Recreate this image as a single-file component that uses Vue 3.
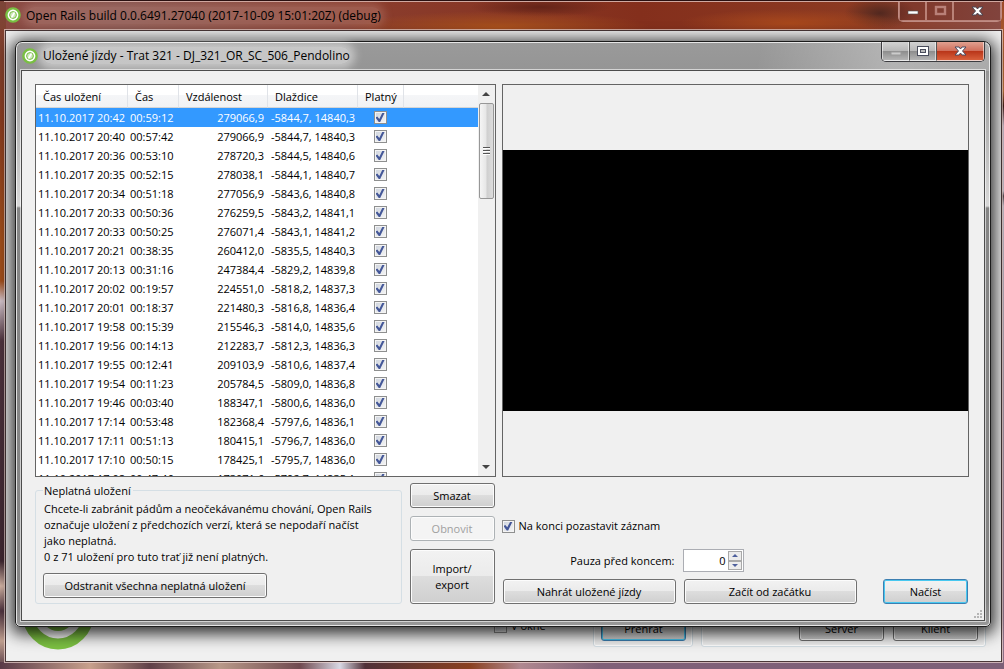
<script setup>
import { ref } from 'vue'

const rows = ref([
  ['11.10.2017 20:42', '00:59:12', '279066,9', '-5844,7, 14840,3'],
  ['11.10.2017 20:40', '00:57:42', '279066,9', '-5844,7, 14840,3'],
  ['11.10.2017 20:36', '00:53:10', '278720,3', '-5844,5, 14840,6'],
  ['11.10.2017 20:35', '00:52:15', '278038,1', '-5844,1, 14840,7'],
  ['11.10.2017 20:34', '00:51:18', '277056,9', '-5843,6, 14840,8'],
  ['11.10.2017 20:33', '00:50:36', '276259,5', '-5843,2, 14841,1'],
  ['11.10.2017 20:33', '00:50:25', '276071,4', '-5843,1, 14841,2'],
  ['11.10.2017 20:21', '00:38:35', '260412,0', '-5835,5, 14840,3'],
  ['11.10.2017 20:13', '00:31:16', '247384,4', '-5829,2, 14839,8'],
  ['11.10.2017 20:02', '00:19:57', '224551,0', '-5818,2, 14837,3'],
  ['11.10.2017 20:01', '00:18:37', '221480,3', '-5816,8, 14836,4'],
  ['11.10.2017 19:58', '00:15:39', '215546,3', '-5814,0, 14835,6'],
  ['11.10.2017 19:56', '00:14:13', '212283,7', '-5812,3, 14836,3'],
  ['11.10.2017 19:55', '00:12:41', '209103,9', '-5810,6, 14837,4'],
  ['11.10.2017 19:54', '00:11:23', '205784,5', '-5809,0, 14836,8'],
  ['11.10.2017 19:46', '00:03:40', '188347,1', '-5800,6, 14836,0'],
  ['11.10.2017 17:14', '00:53:48', '182368,4', '-5797,6, 14836,1'],
  ['11.10.2017 17:11', '00:51:13', '180415,1', '-5796,7, 14836,0'],
  ['11.10.2017 17:10', '00:50:15', '178425,1', '-5795,7, 14836,0'],
  ['11.10.2017 17:08', '00:47:46', '173071,6', '-5792,7, 14835,1'],
])
const selected = ref(0)
const pauseAtEnd = ref(true)
const pause = ref(0)
</script>

<template>
  <div class="desktop">
    <header class="titlebar main-title">
      <svg class="logo" viewBox="0 0 16 16" aria-hidden="true">
        <circle cx="8" cy="8" r="6.6" fill="#fff" stroke="#79bf42" stroke-width="2.4" />
        <circle cx="8" cy="8" r="3.4" fill="#cfe8bd" stroke="#79bf42" stroke-width="1" />
        <path d="M6.5 10.5 9.5 5.5" stroke="#fff" stroke-width="1.6" />
      </svg>
      <h1 class="glow">Open Rails build 0.0.6491.27040 (2017-10-09 15:01:20Z) (debug)</h1>
      <div class="caption glass">
        <button aria-label="Minimalizovat hlavní okno"><svg viewBox="0 0 16 14"><rect x="3" y="7" width="10" height="3" fill="#fff" stroke="#555" stroke-width=".6" /></svg></button>
        <button aria-label="Maximalizovat hlavní okno" disabled><svg viewBox="0 0 16 14"><rect x="4" y="3" width="9" height="7" fill="none" stroke="#b98078" stroke-width="2.4" /></svg></button>
        <button class="close" aria-label="Zavřít hlavní okno"><svg viewBox="0 0 16 14"><path d="M3 3h4l1.500 2L10 3h4l-3.500 4L14 11h-4L8.500 9 7 11H3l3.500-4z" fill="#fff" stroke="#4a4550" stroke-width="1" /></svg></button>
      </div>
    </header>

    <main class="main-client">
      <svg class="big-logo" viewBox="0 0 72 72" aria-hidden="true">
        <circle cx="36" cy="36" r="30" fill="#fff" stroke="#7cc142" stroke-width="11" />
        <circle cx="36" cy="36" r="17" fill="#7cc142" />
      </svg>
      <label class="check windowed"><input type="checkbox" />V okně</label>
      <div class="main-group play"><button class="btn default">Přehrát</button></div>
      <div class="main-group multi"><button class="btn">Server</button><button class="btn">Klient</button></div>
    </main>

    <section class="dialog">
      <header class="titlebar">
        <svg class="logo" viewBox="0 0 16 16" aria-hidden="true">
          <circle cx="8" cy="8" r="6.6" fill="#fff" stroke="#79bf42" stroke-width="2.4" />
          <circle cx="8" cy="8" r="3.4" fill="#cfe8bd" stroke="#79bf42" stroke-width="1" />
          <path d="M6.5 10.5 9.5 5.500" stroke="#fff" stroke-width="1.6" />
        </svg>
        <h2 class="glow">Uložené jízdy - Trat 321 - DJ_321_OR_SC_506_Pendolino</h2>
        <div class="caption">
          <button aria-label="Minimalizovat" disabled><svg viewBox="0 0 16 14"><rect x="3" y="8" width="10" height="3" fill="#ccc" stroke="#999" stroke-width="1" /></svg></button>
          <button aria-label="Maximalizovat"><svg viewBox="0 0 16 14"><rect x="2.500" y="2.500" width="11" height="9" fill="#fff" stroke="#4a4d5c" /><rect x="5.500" y="5.500" width="5" height="3" fill="#bbb" stroke="#4a4d5c" /></svg></button>
          <button class="close red" aria-label="Zavřít"><svg viewBox="0 0 16 14"><path d="M3 3h4l1.500 2L10 3h4l-3.500 4L14 11h-4L8.500 9 7 11H3l3.500-4z" fill="#fff" stroke="#4a4a60" stroke-width="1" /></svg></button>
        </div>
      </header>

      <div class="client">
        <div class="left">
          <div class="list">
            <div class="table-area">
              <table>
                <colgroup><col class="c-date" /><col class="c-time" /><col class="c-dist" /><col class="c-tile" /><col class="c-valid" /><col /></colgroup>
                <thead>
                  <tr><th>Čas uložení</th><th>Čas</th><th>Vzdálenost</th><th>Dlaždice</th><th>Platný</th><th class="rest"></th></tr>
                </thead>
                <tbody>
                  <tr v-for="(r, i) in rows" :key="i" :class="{ selected: i === selected }" @click="selected = i">
                    <td>{{ r[0] }}</td>
                    <td>{{ r[1] }}</td>
                    <td class="num">{{ r[2] }}</td>
                    <td>{{ r[3] }}</td>
                    <td class="valid"><input type="checkbox" checked :aria-label="'Platný ' + r[0]" /></td>
                    <td></td>
                  </tr>
                </tbody>
              </table>
            </div>
            <div class="scrollbar">
              <button aria-label="Nahoru"><svg viewBox="0 0 8 4"><path d="M0 4 4 0l4 4z" fill="#444" /></svg></button>
              <div class="track"><div class="thumb"><i></i><i></i><i></i></div></div>
              <button aria-label="Dolů"><svg viewBox="0 0 8 4"><path d="M0 0h8L4 4z" fill="#444" /></svg></button>
            </div>
          </div>
          <div class="under-list">
            <fieldset>
              <legend>Neplatná uložení</legend>
              <p>Chcete-li zabránit pádům a neočekávanému chování, Open Rails označuje uložení z předchozích verzí, která se nepodaří načíst jako neplatná.<br />0 z 71 uložení pro tuto trať již není platných.</p>
              <button class="btn remove">Odstranit všechna neplatná uložení</button>
            </fieldset>
            <div class="side-buttons">
              <button class="btn">Smazat</button>
              <button class="btn" disabled>Obnovit</button>
              <button class="btn tall">Import/<br />export</button>
            </div>
          </div>
        </div>

        <div class="right">
          <div class="preview"><div class="shot"></div></div>
          <div class="options">
            <label class="check"><input v-model="pauseAtEnd" type="checkbox" />Na konci pozastavit záznam</label>
            <div class="pause">
              <label for="pause">Pauza před koncem:</label>
              <div class="spin">
                <input id="pause" v-model="pause" type="text" inputmode="numeric" />
                <div class="arrows">
                  <button aria-label="Zvýšit" @click="pause++"><svg viewBox="0 0 6 3"><path d="M0 3 3 0l3 3z" fill="#4d5f9c" /></svg></button>
                  <button aria-label="Snížit" @click="pause--"><svg viewBox="0 0 6 3"><path d="M0 0h6L3 3z" fill="#4d5f9c" /></svg></button>
                </div>
              </div>
            </div>
            <div class="actions">
              <button class="btn wide">Nahrát uložené jízdy</button>
              <button class="btn wide">Začít od začátku</button>
              <button class="btn default load">Načíst</button>
            </div>
          </div>
        </div>
        <svg class="grip" viewBox="0 0 9 9" aria-hidden="true">
          <g fill="#b5b5b5"><rect x="6" y="0" width="2" height="2" /><rect x="3" y="3" width="2" height="2" /><rect x="6" y="3" width="2" height="2" /><rect x="0" y="6" width="2" height="2" /><rect x="3" y="6" width="2" height="2" /><rect x="6" y="6" width="2" height="2" /></g>
        </svg>
      </div>
    </section>
  </div>
</template>

<style>
body {
  margin: 0;
}
</style>

<style scoped>
* {
  box-sizing: border-box;
}
.desktop {
  position: relative;
  display: flex;
  flex-direction: column;
  height: 100vh;
  overflow: hidden;
  padding: 0 2px 7px 5px;
  border-top: 1px solid #2a1010;
  font: 11px/16px "Open Sans", "Noto Sans", sans-serif;
  color: #000;
  background:
    linear-gradient(90deg, #5a3a48 0, #c8a08c 90px, #604048 150px, #b89888 220px, #704a50 300px, #d8d8e4 340px, #503038 365px, #8a4020 470px, #b08890 520px, #806078 600px, #7d6078 100%) bottom / 100% 7px no-repeat,
    linear-gradient(#7c4438 0, #8c3d20 120px, #a4501c 240px, #a4501c 280px, #d8c8d0 300px, #50343f 340px, #402832 560px, #d8b8a8 585px, #503440 610px, #c0a090 640px, #503440 669px) left / 6px 100% no-repeat,
    linear-gradient(#9c4a28 0, #b87038 90px, #401c18 105px, #c8b8c8 125px, #c8c0cc 190px, #554850 195px, #c8c0cc 205px, #a898a8 400px, #8a6c84 669px) right / 3px 100% no-repeat,
    radial-gradient(ellipse 150px 16px at 500px 26px, #a8501c, transparent),
    radial-gradient(ellipse 110px 14px at 790px 22px, #a8481c, transparent),
    radial-gradient(ellipse 36px 16px at 880px 12px, #52281f, transparent),
    radial-gradient(ellipse 70px 10px at 540px 6px, #642418, transparent),
    linear-gradient(90deg, #8c4a42, #84504a 120px, #8a3c2c 380px, #842f1c 640px, #8c3a22 860px, #8e5048);
}
.titlebar {
  display: flex;
  align-items: flex-start;
  flex: none;
}
.titlebar h1,
.titlebar h2 {
  margin: 5px 0 0 5px;
  font: 12px/17px "Open Sans", "Noto Sans", sans-serif;
  white-space: nowrap;
}
.main-title {
  height: 29px;
  margin: 0 -1px;
  border-top: 1px solid #d0a8a0;
}
.logo {
  position: relative;
  z-index: 1;
  flex: none;
  width: 16px;
  height: 16px;
  margin: 5px 0 0 1px;
}
.glow {
  border-radius: 10px;
}
.main-title .glow {
  background: rgba(205, 160, 150, .3);
  box-shadow: 0 0 8px 4px rgba(205, 160, 150, .3);
}
.dialog .glow {
  background: rgba(255, 255, 255, .45);
  box-shadow: 0 0 8px 5px rgba(255, 255, 255, .45);
}
.caption {
  display: flex;
  flex: none;
  height: 20px;
  margin-left: auto;
  border: 1px solid #3c3c40;
  border-top: 0;
  border-radius: 0 0 5px 5px;
  overflow: hidden;
}
.caption button {
  display: flex;
  align-items: center;
  justify-content: center;
  width: 27px;
  padding: 0;
  border: 1px solid rgba(255, 255, 255, .55);
  border-width: 0 1px 1px;
  background: linear-gradient(#d2d2d2, #b8b8b8 48%, #8c8c8c 50%, #b4b4b4);
}
.caption button + button {
  border-left: 1px solid #555;
}
.caption svg {
  flex: none;
  width: 16px;
  height: 14px;
}
.caption .close {
  width: 48px;
}
.caption .red {
  background: linear-gradient(#e0a090, #d0705c 48%, #b83418 50%, #d8603c);
}
.glass {
  margin-right: 1px;
  border-color: #c08c84;
}
.glass button,
.glass button + button {
  background: rgba(90, 30, 30, .25);
  border-color: rgba(210, 160, 150, .7);
}
.main-client {
  display: flex;
  align-items: flex-end;
  flex: 1;
  min-height: 0;
  padding: 0 15px 14px 16px;
  border: 1px solid #4a3838;
  background: #f0f0f0;
  box-shadow: 0 0 0 1px rgba(240, 215, 210, .7);
}
.big-logo {
  width: 72px;
  height: 72px;
  margin-bottom: -3px;
}
.windowed {
  margin: 0 auto 13px 400px;
}
.main-group {
  display: flex;
  gap: 9px;
  padding: 26px 6px 5px 7px;
  border: 1px solid #d5dfe5;
  border-radius: 3px;
  box-shadow: inset 0 0 0 1px #fff;
}
.main-group .btn {
  width: 85px;
}
.multi {
  margin-left: 8px;
  padding-right: 7px;
  padding-left: 97px;
}

.dialog {
  position: absolute;
  inset: 40px 13px 42px 15px;
  display: flex;
  flex-direction: column;
  padding: 0 5px 5px;
  border: 1px solid #1c1c1c;
  border-radius: 7px 7px 5px 5px;
  background:
    linear-gradient(100deg, transparent 76%, rgba(255, 255, 255, .28) 90%, rgba(255, 255, 255, .2) 100%) top / 100% 29px no-repeat,
    linear-gradient(#9a9a9a 0, #959595 28px, #a8a8a8 60px, #d8d8d8 164px, #858585 166px, #858585 560px, #999 100%);
  box-shadow: inset 0 0 0 1px rgba(255, 255, 255, .75), 0 3px 16px 4px rgba(0, 0, 0, .8);
}
.dialog .titlebar {
  height: 28px;
}
.dialog .logo {
  margin-top: 6px;
}
.client {
  position: relative;
  display: flex;
  flex: 1;
  gap: 6px;
  min-height: 0;
  padding: 13px 15px 16px 13px;
  border: 1px solid #4c4c4c;
  background: #f0f0f0;
  box-shadow: 0 0 0 1px rgba(255, 255, 255, .6);
}
.left,
.right {
  display: flex;
  flex-direction: column;
  gap: 6px;
  min-width: 0;
}
.left {
  flex: 460;
}
.right {
  flex: 467;
}
.list {
  display: flex;
  flex: 1;
  min-height: 0;
  border: 1px solid #646464;
  background: #fff;
}
.table-area {
  flex: 1;
  overflow: hidden;
}
table {
  width: 100%;
  table-layout: fixed;
  border-collapse: separate;
  border-spacing: 0;
}
.c-date {
  width: 92px;
}
.c-time {
  width: 51px;
}
.c-dist {
  width: 89px;
}
.c-tile {
  width: 90px;
}
.c-valid {
  width: 46px;
}
th {
  height: 23px;
  padding: 2px 0 0 7px;
  border-right: 1px solid #e0e3e8;
  border-bottom: 1px solid #d5d5d5;
  background: linear-gradient(#fff 45%, #f5f6f8 46%, #f1f2f4);
  font-weight: 400;
  text-align: left;
  white-space: nowrap;
}
th.rest {
  border-right: 0;
}
td {
  height: 19px;
  padding: 0 0 0 2px;
  white-space: nowrap;
}
td:nth-child(4) {
  padding-left: 3px;
}
td.num {
  padding-right: 4px;
  text-align: right;
}
td.valid {
  padding: 0 2px 2px 0;
  text-align: center;
}
.selected td {
  background: #3399ff;
  color: #fff;
}
input[type="checkbox"] {
  appearance: none;
  display: inline-flex;
  align-items: center;
  justify-content: center;
  flex: none;
  width: 13px;
  height: 13px;
  margin: 0;
  border: 1px solid #8e8f8f;
  background: linear-gradient(135deg, #cdd3dd, #f6f6f6);
  box-shadow: inset 0 0 0 1px #f4f4f4;
  vertical-align: middle;
}
input[type="checkbox"]:checked::before {
  content: "";
  width: 9px;
  height: 9px;
  background: #445798;
  clip-path: polygon(0 50%, 20% 38%, 42% 65%, 75% 0, 100% 0, 52% 100%, 36% 100%);
}
.scrollbar {
  display: flex;
  flex-direction: column;
  width: 17px;
  background: #f0f0f0;
}
.scrollbar button {
  display: flex;
  align-items: center;
  justify-content: center;
  height: 18px;
  padding: 0;
  border: 0;
  background: none;
}
.scrollbar svg {
  width: 8px;
  height: 4px;
}
.track {
  flex: 1;
}
.thumb {
  display: flex;
  flex-direction: column;
  align-items: center;
  justify-content: center;
  gap: 1px;
  width: 15px;
  height: 27%;
  margin: 0 1px;
  border: 1px solid #979797;
  border-radius: 2px;
  background: linear-gradient(90deg, #f5f5f5, #e6e6e6 48%, #cfcfcf 52%, #dcdcdc);
}
.thumb i {
  width: 7px;
  height: 2px;
  border-top: 1px solid #555;
  background: #fff;
}
.under-list {
  display: flex;
  gap: 8px;
  padding-right: 1px;
}
fieldset {
  flex: 1;
  min-width: 0;
  margin: 0;
  padding: 3px 7px 5px;
  border: 1px solid #d5dfe5;
  border-radius: 3px;
}
legend {
  padding: 0 2px 0 1px;
  line-height: 15px;
}
p {
  margin: 0 12px 8px 1px;
}
.btn {
  height: 25px;
  padding: 0;
  border: 1px solid #707070;
  border-radius: 3px;
  background: linear-gradient(#f2f2f2, #ebebeb 49%, #dddddd 50%, #cfcfcf);
  box-shadow: inset 0 0 0 1px #fcfcfc;
  font: inherit;
  color: #000;
}
.btn:disabled {
  border-color: #adb2b5;
  background: #f4f4f4;
  color: #a0a0a0;
}
.btn.default {
  border-color: #3c7fb1;
  box-shadow: inset 0 0 0 1px #48c8f0;
}
.remove {
  display: block;
  width: 224px;
}
.side-buttons {
  display: flex;
  flex-direction: column;
  gap: 8px;
  width: 85px;
}
.btn.tall {
  height: 55px;
}
.preview {
  display: flex;
  align-items: center;
  flex: 1;
  min-height: 0;
  border: 1px solid #646464;
}
.shot {
  width: 100%;
  aspect-ratio: 465 / 261;
  background: #000;
}
.options {
  display: flex;
  flex-direction: column;
  justify-content: flex-end;
  height: 121px;
}
.check {
  display: flex;
  align-items: center;
  gap: 4px;
}
.pause {
  display: flex;
  align-items: center;
  gap: 8px;
  width: 242px;
  margin: 15px 0 7px;
  justify-content: flex-end;
}
.spin {
  display: flex;
  width: 61px;
  height: 23px;
  padding: 1px;
  border: 1px solid #abadb3;
  background: #fff;
}
.spin input {
  flex: 1;
  min-width: 0;
  padding: 0 2px;
  border: 0;
  background: none;
  font: inherit;
  text-align: right;
}
.arrows {
  display: flex;
  flex-direction: column;
  width: 14px;
}
.arrows button {
  display: flex;
  align-items: center;
  justify-content: center;
  flex: 1;
  padding: 0;
  border: 1px solid #a9a9a9;
  background: #ececec;
}
.arrows svg {
  width: 6px;
  height: 3px;
}
.actions {
  display: flex;
  gap: 8px;
  padding: 0 1px;
}
.wide {
  flex: 0 1 173px;
}
.load {
  width: 85px;
  margin-left: auto;
}
.grip {
  position: absolute;
  right: 1px;
  bottom: 1px;
  width: 9px;
  height: 9px;
}
</style>
